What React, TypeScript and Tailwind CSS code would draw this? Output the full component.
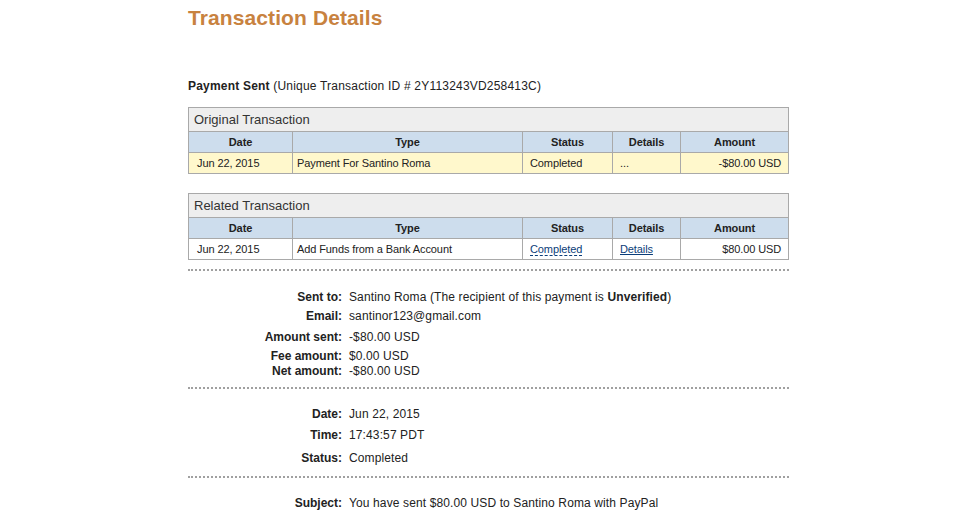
const cols = ["w-[104px]", "w-[230px]", "w-[90px]", "w-[68px]", "w-[108px]"];

interface TxRow {
  date: string;
  type: string;
  status: string;
  details: string;
  amount: string;
}

function TxTable({
  title,
  row,
  highlight,
  linked,
}: {
  title: string;
  row: TxRow;
  highlight?: boolean;
  linked?: boolean;
}) {
  const headers = ["Date", "Type", "Status", "Details", "Amount"];
  return (
    <table className="w-[600px] border-collapse border border-[#a9a9a9] text-[11px] tracking-[-0.1px] text-[#222] table-fixed">
      <colgroup>
        {cols.map((c, i) => (
          <col key={i} className={c} />
        ))}
      </colgroup>
      <thead>
        <tr className="h-[24px] bg-[#eeeeee]">
          <th colSpan={5} className="text-left font-normal text-[13px] tracking-normal pl-[5px] text-[#333] border border-[#a9a9a9]">
            {title}
          </th>
        </tr>
        <tr className="h-[21px] bg-[#cddded]">
          {headers.map((h) => (
            <th key={h} className="font-bold text-center border border-[#a9a9a9]">
              {h}
            </th>
          ))}
        </tr>
      </thead>
      <tbody>
        <tr className={`h-[21px] ${highlight ? "bg-[#fff8cc]" : "bg-white"}`}>
          <td className="pl-[8px] border border-[#a9a9a9]">{row.date}</td>
          <td className="pl-[4px] border border-[#a9a9a9]">{row.type}</td>
          <td className="pl-[7px] border border-[#a9a9a9]">
            {linked ? (
              <span className="text-[#0b3d79] border-b border-dashed border-[#0b3d79] leading-[12px] inline-block">
                {row.status}
              </span>
            ) : (
              row.status
            )}
          </td>
          <td className="pl-[7px] border border-[#a9a9a9]">
            {linked ? <span className="text-[#0b3d79] underline">{row.details}</span> : row.details}
          </td>
          <td className="pr-[7px] text-right border border-[#a9a9a9]">{row.amount}</td>
        </tr>
      </tbody>
    </table>
  );
}

function Divider({ className = "" }: { className?: string }) {
  return <div className={`w-[601px] border-t-2 border-dotted border-[#a0a0a0] ${className}`} />;
}

function Field({ label, children, className = "" }: { label: string; children: React.ReactNode; className?: string }) {
  return (
    <div className={`flex text-[12px] leading-[15px] ${className}`}>
      <div className="w-[161px] text-right font-bold text-[#222] pr-[7px]">{label}:</div>
      <div className="text-[#222] tracking-[0.12px]">{children}</div>
    </div>
  );
}

export default function App() {
  return (
    <div className="w-[972px] h-[515px] bg-white overflow-hidden font-['Liberation_Sans',Arial,sans-serif]">
      <div className="ml-[188px] pt-[6px] flex flex-col">
        <h1 className="text-[21px] leading-[24px] font-bold tracking-[0.1px] text-[#c8823f]">Transaction Details</h1>
        <p className="mt-[48px] text-[12px] leading-[16px] tracking-[0.2px] text-[#222]">
          <span className="font-bold">Payment Sent</span> (Unique Transaction ID # 2Y113243VD258413C)
        </p>
        <div className="mt-[13px]">
          <TxTable
            title="Original Transaction"
            highlight
            row={{ date: "Jun 22, 2015", type: "Payment For Santino Roma", status: "Completed", details: "...", amount: "-$80.00 USD" }}
          />
        </div>
        <div className="mt-[19px]">
          <TxTable
            title="Related Transaction"
            linked
            row={{ date: "Jun 22, 2015", type: "Add Funds from a Bank Account", status: "Completed", details: "Details", amount: "$80.00 USD" }}
          />
        </div>
        <Divider className="mt-[9px]" />
        <Field label="Sent to" className="mt-[19px]">
          Santino Roma (The recipient of this payment is <span className="font-bold">Unverified</span>)
        </Field>
        <Field label="Email" className="mt-[4px]">santinor123@gmail.com</Field>
        <Field label="Amount sent" className="mt-[6px]">-$80.00 USD</Field>
        <Field label="Fee amount" className="mt-[4px]">$0.00 USD</Field>
        <Field label="Net amount">-$80.00 USD</Field>
        <Divider className="mt-[8px]" />
        <Field label="Date" className="mt-[18px]">Jun 22, 2015</Field>
        <Field label="Time" className="mt-[6px]">17:43:57 PDT</Field>
        <Field label="Status" className="mt-[8px]">Completed</Field>
        <Divider className="mt-[10px]" />
        <Field label="Subject" className="mt-[18px]">You have sent $80.00 USD to Santino Roma with PayPal</Field>
      </div>
    </div>
  );
}
